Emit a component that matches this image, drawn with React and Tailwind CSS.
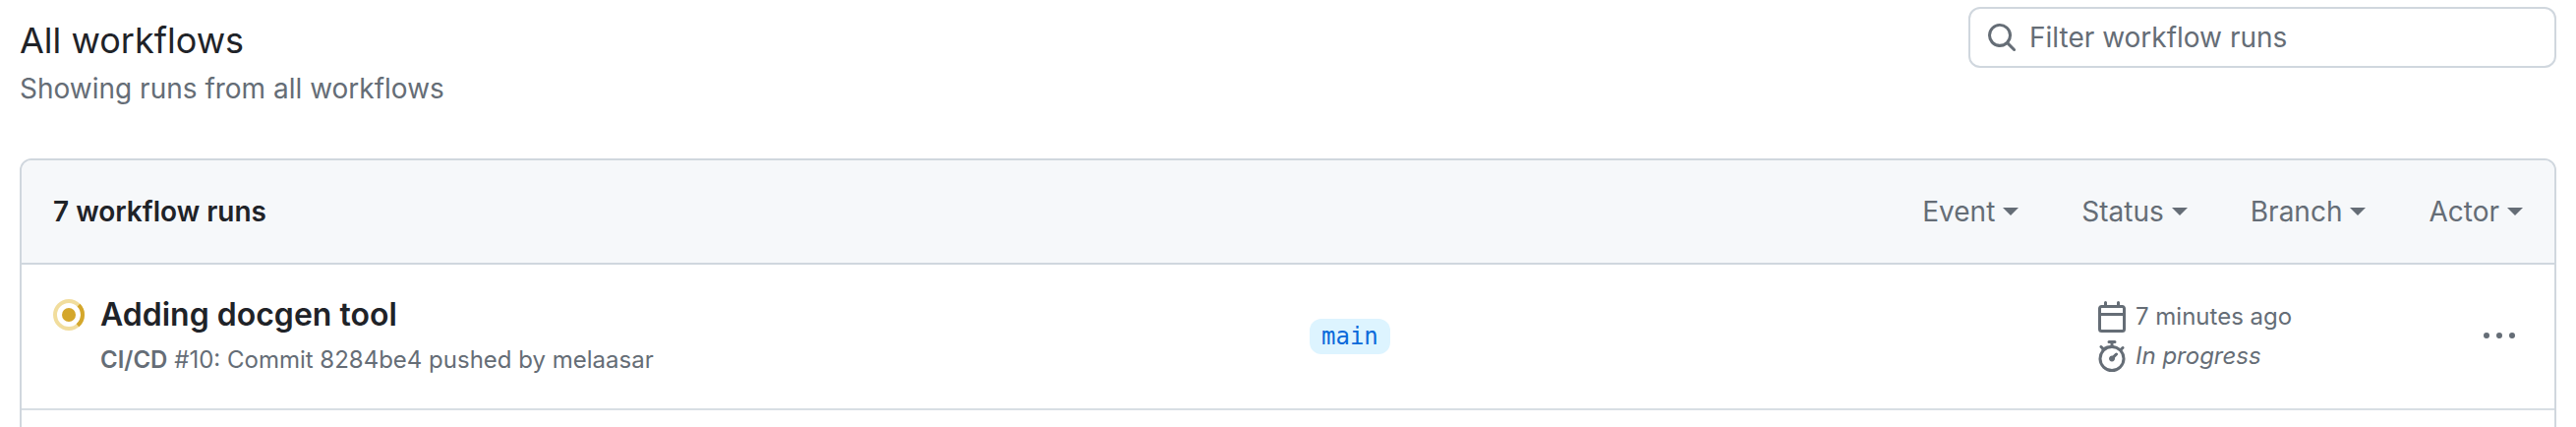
import React from "react";

const SearchIcon = () => (
  <svg viewBox="0 0 16 16" className="w-8 h-8 fill-[#656d76] shrink-0">
    <path d="M10.68 11.74a6 6 0 0 1-7.922-8.982 6 6 0 0 1 8.982 7.922l3.04 3.04a.749.749 0 0 1-.326 1.275.749.749 0 0 1-.734-.215ZM11.5 7a4.499 4.499 0 1 0-8.997 0A4.499 4.499 0 0 0 11.5 7Z" />
  </svg>
);

const CalendarIcon = () => (
  <svg viewBox="0 0 16 16" className="w-8 h-8 fill-[#656d76] shrink-0">
    <path d="M4.75 0a.75.75 0 0 1 .75.75V2h5V.75a.75.75 0 0 1 1.5 0V2h1.25c.966 0 1.75.784 1.75 1.75v10.5A1.75 1.75 0 0 1 13.25 16H2.75A1.75 1.75 0 0 1 1 14.25V3.75C1 2.784 1.784 2 2.75 2H4V.75A.75.75 0 0 1 4.75 0ZM2.5 7.5v6.75c0 .138.112.25.25.25h10.5a.25.25 0 0 0 .25-.25V7.5Zm10.75-4H2.75a.25.25 0 0 0-.25.25V6h11V3.75a.25.25 0 0 0-.25-.25Z" />
  </svg>
);

const StopwatchIcon = () => (
  <svg viewBox="0 0 16 16" className="w-8 h-8 fill-[#656d76] shrink-0">
    <path d="M5.75.75A.75.75 0 0 1 6.5 0h3a.75.75 0 0 1 0 1.5h-.75v1l-.001.041a6.724 6.724 0 0 1 3.464 1.435l.007-.006.75-.75a.749.749 0 0 1 1.275.326.749.749 0 0 1-.215.734l-.75.75-.006.007a6.75 6.75 0 1 1-10.548 0L2.72 4.53l-.75-.75a.749.749 0 0 1 .326-1.275.749.749 0 0 1 .734.215l.75.75.007.006A6.72 6.72 0 0 1 7.25 2.541V1.5H6.5a.75.75 0 0 1-.75-.75ZM8 14.5a5.25 5.25 0 1 0-.001-10.501A5.25 5.25 0 0 0 8 14.5Zm.389-6.7 1.33-1.33a.75.75 0 1 1 1.061 1.06L9.45 8.861A1.503 1.503 0 0 1 8 10.75a1.499 1.499 0 1 1 .389-2.95Z" />
  </svg>
);

const KebabIcon = () => (
  <svg viewBox="0 0 16 16" className="w-8 h-8 fill-[#656d76]">
    <path d="M8 9a1.5 1.5 0 1 0 0-3 1.5 1.5 0 0 0 0 3ZM1.5 9a1.5 1.5 0 1 0 0-3 1.5 1.5 0 0 0 0 3Zm13 0a1.5 1.5 0 1 0 0-3 1.5 1.5 0 0 0 0 3Z" />
  </svg>
);

const StatusIcon = () => (
  <svg viewBox="0 0 32 32" className="w-8 h-8 shrink-0" fill="none">
    <circle cx="16" cy="16" r="14" stroke="#dbab0a" strokeOpacity="0.4" strokeWidth="4" />
    <path d="M26 6.2A14 14 0 0 1 25 26.7" stroke="#d4a72c" strokeWidth="4" />
    <circle cx="16" cy="16" r="7" fill="#d4a72c" />
  </svg>
);

const Filter = ({ label }) => (
  <div className="flex items-center gap-2 text-[28px] leading-10 text-[#656d76]">
    {label}
    <span className="w-0 h-0 border-x-[8px] border-x-transparent border-t-[8px] border-t-[#656d76]" />
  </div>
);

export default function App() {
  return (
    <div className="h-[434px] overflow-hidden bg-white px-5 font-['Inter',sans-serif] text-[#1f2328]">
      {/* page title and search */}
      <div className="flex justify-between h-[161px]">
        <div className="pt-[18px]">
          <h1 className="text-[36px] leading-[46px] font-normal">All workflows</h1>
          <p className="mt-2 text-[28px] leading-9 text-[#656d76]">Showing runs from all workflows</p>
        </div>
        <div className="mt-[7px] w-[598px] h-[62px] flex items-center gap-3 px-4 border-2 border-[#d0d7de] rounded-xl">
          <SearchIcon />
          <span className="text-[28px] text-[#656d76]">Filter workflow runs</span>
        </div>
      </div>

      {/* runs box */}
      <div className="border-2 border-[#d0d7de] rounded-t-xl">
        <div className="flex items-center justify-between h-[106px] px-8 bg-[#f6f8fa] rounded-t-[10px] border-b-2 border-[#d0d7de]">
          <span className="text-[28px] font-semibold">7 workflow runs</span>
          <div className="flex gap-16">
            <Filter label="Event" />
            <Filter label="Status" />
            <Filter label="Branch" />
            <Filter label="Actor" />
          </div>
        </div>

        <div className="flex items-center h-[148px] pl-8 pr-10 border-b-2 border-[#d8dee4]">
          <div className="w-[1278px] flex gap-4 shrink-0">
            <div className="pt-1">
              <StatusIcon />
            </div>
            <div>
              <div className="text-[32px] leading-10 font-semibold">Adding docgen tool</div>
              <div className="mt-2 text-[24px] leading-9 text-[#656d76]">
                <span className="font-semibold">CI/CD</span> #10: Commit 8284be4 pushed by melaasar
              </div>
            </div>
          </div>
          <div className="w-[800px] shrink-0">
            <span className="inline-block h-9 px-3 rounded-xl bg-[#ddf4ff] text-[#0969da] font-['DejaVu_Sans_Mono',monospace] text-[24px] leading-9">
              main
            </span>
          </div>
          <div className="flex-1 text-[24px] text-[#656d76]">
            <div className="flex items-center gap-2 h-10">
              <CalendarIcon />
              7 minutes ago
            </div>
            <div className="flex items-center gap-2 h-10 italic">
              <StopwatchIcon />
              In progress
            </div>
          </div>
          <KebabIcon />
        </div>
        <div className="h-10" />
      </div>
    </div>
  );
}
